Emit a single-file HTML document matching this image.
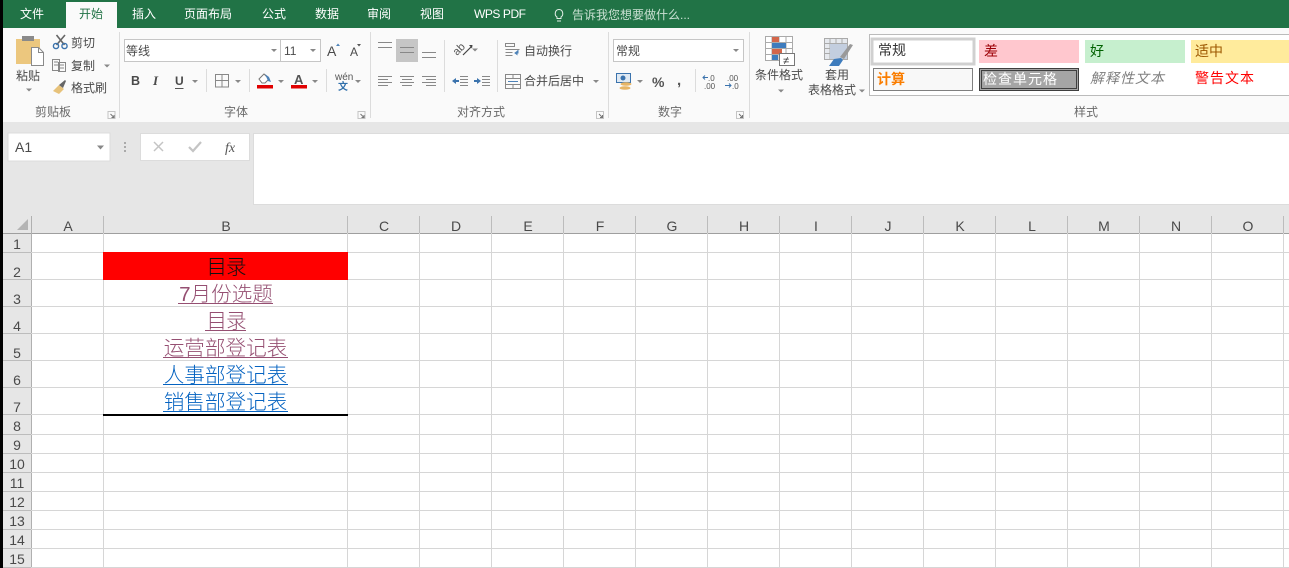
<!DOCTYPE html>
<html lang="zh"><head><meta charset="utf-8"><title>Excel</title>
<style>
html,body{margin:0;padding:0;background:#fff;width:1289px;height:568px;overflow:hidden}
svg{display:block}
text{font-family:"Liberation Sans","Noto Sans CJK SC",sans-serif;font-size:12px;fill:#4a4a4a}
.t{fill:#fff;font-size:12px}
.l{fill:#6a6a6a;font-size:12px}
.h{fill:#4a4a4a;font-size:14px;text-anchor:middle}
.c{font-size:20.6px;text-anchor:middle;font-weight:300}
.s{font-size:14px}
</style></head><body>
<svg width="1289" height="568" viewBox="0 0 1289 568" xmlns="http://www.w3.org/2000/svg">
<defs>
<path id="ar" d="M-3 -1.500H3L0 1.500Z" fill="#888"/>
<g id="lau"><path d="M-3.500 -3.500H3.500V3.500H-3.500Z" fill="none" stroke="#c4c4c4"/><path d="M-1 -1L2.500 2.500M2.500 0V2.500H0" fill="none" stroke="#777"/></g>
</defs>
<rect width="1289" height="568" fill="#fff"/>
<!-- top green -->
<rect width="1289" height="28" fill="#217346"/>
<rect x="66" y="2" width="51" height="27" fill="#fafafa"/>
<g class="tabs">
<text class="t" x="20" y="18">文件</text>
<text x="79" y="18" style="fill:#217346">开始</text>
<text class="t" x="132" y="18">插入</text>
<text class="t" x="184" y="18">页面布局</text>
<text class="t" x="262" y="18">公式</text>
<text class="t" x="315" y="18">数据</text>
<text class="t" x="367" y="18">审阅</text>
<text class="t" x="420" y="18">视图</text>
<text class="t" x="474" y="18" textLength="52">WPS PDF</text>
<path d="M557 18.500v-1.500c-3-2-2-7.500 2-7.500s5 5.500 2 7.500v1.500zM557 21h4" fill="none" stroke="#e4efe8"/>
<text x="572" y="19" style="fill:#c9e0d2;font-size:12px">告诉我您想要做什么...</text>
</g>
<!-- ribbon -->
<rect y="28" width="1289" height="94" fill="#fafafa"/>
<rect y="122" width="1289" height="84" fill="#e6e6e6"/>
<!-- separators -->
<g stroke="#dcdcdc"><path d="M119.500 32V118M370.500 32V118M608.500 32V118M749.500 32V118"/>
<path d="M206.500 69V92M249.500 69V92M326.500 69V92M444.500 40V92M497.500 40V92M695.500 69V92"/></g>
<!-- clipboard -->
<rect x="16" y="39" width="24" height="25" fill="#ecc77e"/>
<rect x="22" y="36" width="12" height="5" fill="#8a8a8a"/>
<path d="M31.500 47.500h7l5 5v13h-12z" fill="#fff" stroke="#8a8a8a"/>
<path d="M38.500 47.500v5h5" fill="none" stroke="#8a8a8a"/>
<text x="16" y="80">粘贴</text>
<use href="#ar" x="29" y="90"/>
<path d="M56.500 35l8 10M65 35l-8.500 10" stroke="#666" stroke-width="1.600" fill="none"/>
<circle cx="56" cy="46" r="2.600" fill="none" stroke="#3b73ad" stroke-width="1.400"/><circle cx="64.500" cy="46" r="2.600" fill="none" stroke="#3b73ad" stroke-width="1.400"/>
<text x="71" y="47">剪切</text>
<path d="M52.500 59.500h7v11h-7zM58.500 62.500h7v9h-7z" fill="#fafafa" stroke="#888"/>
<path d="M54 62h4M54 65h4M60 65h4M60 68h4" stroke="#888"/>
<text x="71" y="70">复制</text>
<use href="#ar" x="107" y="66"/>
<path d="M53 91l6-6 5 4-5 5z" fill="#e7c27a"/><path d="M59 85l6-5 1 1-3 7z" fill="#666"/>
<text x="71" y="92">格式刷</text>
<text x="35" y="116" class="l">剪贴板</text>
<use href="#lau" x="111.500" y="115"/>
<!-- font -->
<rect x="124.500" y="39.500" width="196" height="22" fill="#fff" stroke="#c6c6c6"/>
<path d="M280.500 39.500V61.500" stroke="#c6c6c6"/>
<text x="126" y="55">等线</text>
<use href="#ar" x="274" y="50.500"/>
<text x="284" y="55">11</text>
<use href="#ar" x="313" y="50.500"/>
<text x="327" y="56" style="font-size:14px">A</text><path d="M336 46l2-2.500 2 2.500z" fill="#4d82b8"/>
<text x="350" y="56" style="font-size:12px">A</text><path d="M357 44h4l-2 2.500z" fill="#555"/>
<text x="131" y="85" style="font-weight:bold;font-size:12.500px">B</text>
<text x="153" y="85" style="font-style:italic;font-weight:bold;font-size:13px;font-family:'Liberation Serif',serif">I</text>
<text x="175" y="85" style="font-weight:bold;font-size:12px">U</text><path d="M175 88.500h8.500" stroke="#555"/>
<use href="#ar" x="195" y="81.500"/>
<path d="M215.500 74.500h13v12.500h-13zM222 74.500v12.500M215.500 80.500h13" fill="none" stroke="#888"/>
<use href="#ar" x="238" y="81.500"/>
<path d="M259 79l5-5 5 5-4 4h-3z" fill="#fff" stroke="#777"/><path d="M265 74l4 3 2 5-3-1z" fill="#4d82b8"/>
<rect x="257" y="85" width="16" height="3.500" fill="#e00000"/>
<use href="#ar" x="281" y="81.500"/>
<text x="294" y="84" style="font-size:13px;font-weight:bold;fill:#555">A</text>
<rect x="291" y="85" width="16" height="3.500" fill="#e00000"/>
<use href="#ar" x="315" y="81.500"/>
<text x="335" y="80" style="font-size:10px;fill:#555">wén</text>
<text x="338" y="90" style="font-size:10px;font-weight:bold;fill:#2f6fab">文</text>
<use href="#ar" x="358" y="81.500"/>
<text x="224" y="116" class="l">字体</text>
<use href="#lau" x="361.500" y="115"/>
<!-- align -->
<rect x="396" y="39" width="22" height="23" fill="#c6c6c6"/>
<g stroke="#888" fill="none">
<path d="M378 42.500h14M378 47.500h14"/>
<path d="M400 47.500h14M400 52.500h14"/>
<path d="M422 52.500h14M422 57.500h14"/>
<path d="M378 76.500h14M378 79.500h10M378 82.500h14M378 85.500h10"/>
<path d="M400 76.500h14M402 79.500h10M400 82.500h14M402 85.500h10"/>
<path d="M422 76.500h14M426 79.500h10M422 82.500h14M426 85.500h10"/>
<path d="M460 76.500h8M460 79.500h8M460 82.500h8M460 85.500h8"/>
<path d="M482 76.500h8M482 79.500h8M482 82.500h8M482 85.500h8"/>
<path d="M505.500 43.500h9v3h-9zM505.500 49.500h14M505.500 52.500h7M505.500 55.500h7"/>
<path d="M505.500 74.500h15v14h-15zM505.500 78.500h15M505.500 84.500h15M513 74.500v4M513 84.500v4"/>
<path d="M508 81.500h10" stroke="#4d82b8"/>
</g>
<text transform="translate(457 56) rotate(-45)" style="font-size:11px;fill:#555">ab</text>
<path d="M463 55l8-8" stroke="#444" stroke-width="1.200"/><path d="M469 45l3.500 0-.5 3.500z" fill="#444"/>
<path d="M518 50v3h-3M515 53l2-1.500v3z" stroke="#4d82b8" fill="none"/>
<use href="#ar" x="475" y="50"/>
<path d="M452 81l4-3v2h3v2h-3v2z" fill="#3b73ad"/><path d="M481 81l-4-3v2h-3v2h3v2z" fill="#3b73ad"/>
<text x="524" y="55">自动换行</text>
<text x="524" y="85">合并后居中</text>
<use href="#ar" x="596" y="81.500"/>
<text x="457" y="116" class="l">对齐方式</text>
<use href="#lau" x="600" y="115"/>
<!-- number -->
<rect x="613.500" y="39.500" width="130" height="22" fill="#fff" stroke="#c6c6c6"/>
<text x="616" y="55">常规</text>
<use href="#ar" x="736" y="50.500"/>
<rect x="616.500" y="73.500" width="14" height="9" fill="#dfe9f3" stroke="#3b73ad"/>
<circle cx="623" cy="78" r="2.500" fill="#3b73ad"/>
<ellipse cx="626" cy="84" rx="5.500" ry="1.800" fill="#e7b565"/><ellipse cx="625" cy="88" rx="5.500" ry="1.800" fill="#e7b565"/>
<use href="#ar" x="640" y="81.500"/>
<text x="652" y="87" style="font-size:14px;font-weight:bold;fill:#555">%</text>
<text x="677" y="85" style="font-size:15px;font-weight:bold;fill:#555">,</text>
<text x="708" y="81" style="font-size:8px;fill:#555">.0</text><text x="704" y="89" style="font-size:8px;fill:#555">.00</text>
<path d="M708 77.500h-5M705 75.500l-2 2 2 2" stroke="#3b73ad" fill="none"/>
<text x="727" y="81" style="font-size:8px;fill:#555">.00</text><text x="732" y="89" style="font-size:8px;fill:#555">.0</text>
<path d="M725 85.500h6M729 83.500l2 2-2 2" stroke="#3b73ad" fill="none"/>
<text x="658" y="116" class="l">数字</text>
<use href="#lau" x="740" y="115"/>
<!-- cond fmt -->
<path d="M765.500 36.500h27v24h-27zM765.500 42.500h27M765.500 48.500h27M765.500 54.500h27M772 36.500v24M779 36.500v24M786 36.500v24" fill="#fff" stroke="#aaa"/>
<rect x="772" y="37" width="7" height="5" fill="#d3664a"/><rect x="772" y="43" width="14" height="5" fill="#3e7cbd"/><rect x="772" y="49" width="10" height="5" fill="#d3664a"/><rect x="772" y="55" width="6" height="5" fill="#3e7cbd"/>
<rect x="779.500" y="53.500" width="15" height="12" fill="#fff" stroke="#777"/>
<text x="783" y="64" style="font-size:11px;fill:#333">≠</text>
<text x="755" y="79">条件格式</text>
<use href="#ar" x="781" y="91"/>
<path d="M824.500 38.500h23v21h-23zM824.500 43.500h23M824.500 48.500h23M824.500 53.500h23M830 38.500v21M836 38.500v21M842 38.500v21" fill="#e6e9ee" stroke="#aaa"/>
<rect x="830" y="44" width="17" height="15" fill="#c3cedf"/>
<path d="M840 57l10-13 3 1-9 14z" fill="#999"/><path d="M829 66l5-7 7-1 2 2-4 6z" fill="#3e7cbd"/>
<text x="825" y="79">套用</text>
<text x="808" y="94">表格格式</text>
<use href="#ar" x="862" y="91"/>
<!-- styles -->
<rect x="869.500" y="34.500" width="424" height="61" fill="#fff" stroke="#bbb"/>
<rect x="872" y="39" width="102" height="25" fill="#fff" stroke="#d0d0d0" stroke-width="3"/>
<text x="878" y="55" class="s" style="fill:#333">常规</text>
<rect x="979" y="40" width="100" height="23" fill="#ffc7ce"/>
<text x="984" y="56" class="s" style="fill:#9c0006">差</text>
<rect x="1085" y="40" width="100" height="23" fill="#c6efce"/>
<text x="1090" y="56" class="s" style="fill:#006100">好</text>
<rect x="1191" y="40" width="98" height="23" fill="#ffeb9c"/>
<text x="1195" y="56" class="s" style="fill:#9c5700">适中</text>
<rect x="873.500" y="68.500" width="99" height="22" fill="#f8f8f8" stroke="#7f7f7f"/>
<text x="877" y="84" class="s" style="fill:#fa7d00;font-weight:bold">计算</text>
<rect x="979.500" y="68.500" width="99" height="22" fill="#a5a5a5" stroke="#3f3f3f"/>
<rect x="981.500" y="70.500" width="95" height="18" fill="none" stroke="#3f3f3f"/>
<text x="983" y="84" class="s" style="fill:#fff;letter-spacing:1px">检查单元格</text>
<text x="1090" y="83" class="s" style="fill:#7f7f7f;font-style:italic;letter-spacing:1px">解释性文本</text>
<text x="1195" y="83" class="s" style="fill:#ff0000;letter-spacing:1px">警告文本</text>
<text x="1074" y="116" class="l">样式</text>
<!-- formula bar -->
<rect x="8" y="133" width="102" height="28" fill="#fff" stroke="#dcdcdc"/>
<text x="15" y="152" style="font-size:14px">A1</text>
<path d="M97 145.500h7l-3.500 4z" fill="#888"/>
<g fill="#aaa"><rect x="124" y="142" width="2" height="2"/><rect x="124" y="146" width="2" height="2"/><rect x="124" y="150" width="2" height="2"/></g>
<rect x="140.500" y="133.500" width="109" height="27" fill="#fff" stroke="#dcdcdc"/>
<path d="M154 142l9 9M163 142l-9 9" stroke="#c4c4c4" stroke-width="1.500"/>
<path d="M189 147l4 4 8-9" stroke="#c4c4c4" stroke-width="2.200" fill="none"/>
<text x="225" y="152" style="font-family:'Liberation Serif',serif;font-style:italic;font-size:14px;fill:#555">fx</text>
<rect x="253.500" y="133.500" width="1040" height="71" fill="#fff" stroke="#dcdcdc"/>
<!-- header -->
<rect y="206" width="1289" height="362" fill="#fff"/>
<rect y="206" width="1289" height="27" fill="#e6e6e6"/>
<rect x="3" y="233" width="28" height="335" fill="#e6e6e6"/>
<path d="M28 219V230H17Z" fill="#b4b4b4"/>
<path d="M0 233.500H1289" stroke="#9f9f9f"/>
<path d="M31.500 216V568" stroke="#b0b0b0"/>
<!-- grid lines -->
<g stroke="#d6d6d6">
<path d="M31 252.500H1289M31 279.500H1289M31 306.500H1289M31 333.500H1289M31 360.500H1289M31 387.500H1289M31 414.500H1289M31 434.500H1289M31 453.500H1289M31 472.500H1289M31 491.500H1289M31 510.500H1289M31 529.500H1289M31 548.500H1289M31 567.500H1289"/>
<path d="M103.500 233V568M347.500 233V568M419.500 233V568M491.500 233V568M563.500 233V568M635.500 233V568M707.500 233V568M779.500 233V568M851.500 233V568M923.500 233V568M995.500 233V568M1067.500 233V568M1139.500 233V568M1211.500 233V568M1283.500 233V568"/>
</g>
<g stroke="#bcbcbc">
<path d="M103.500 216V233M347.500 216V233M419.500 216V233M491.500 216V233M563.500 216V233M635.500 216V233M707.500 216V233M779.500 216V233M851.500 216V233M923.500 216V233M995.500 216V233M1067.500 216V233M1139.500 216V233M1211.500 216V233M1283.500 216V233"/>
<path d="M3 252.500H31M3 279.500H31M3 306.500H31M3 333.500H31M3 360.500H31M3 387.500H31M3 414.500H31M3 434.500H31M3 453.500H31M3 472.500H31M3 491.500H31M3 510.500H31M3 529.500H31M3 548.500H31M3 567.500H31"/>
</g>
<rect width="3" height="568" fill="#000"/>
<!-- col heads -->
<g>
<text class="h" x="68" y="231">A</text><text class="h" x="226" y="231">B</text><text class="h" x="384" y="231">C</text><text class="h" x="456" y="231">D</text><text class="h" x="528" y="231">E</text><text class="h" x="600" y="231">F</text><text class="h" x="672" y="231">G</text><text class="h" x="744" y="231">H</text><text class="h" x="816" y="231">I</text><text class="h" x="888" y="231">J</text><text class="h" x="960" y="231">K</text><text class="h" x="1032" y="231">L</text><text class="h" x="1104" y="231">M</text><text class="h" x="1176" y="231">N</text><text class="h" x="1248" y="231">O</text>
</g>
<!-- row heads -->
<g>
<text class="h" x="17" y="249">1</text><text class="h" x="17" y="277">2</text><text class="h" x="17" y="304">3</text><text class="h" x="17" y="331">4</text><text class="h" x="17" y="358">5</text><text class="h" x="17" y="385">6</text><text class="h" x="17" y="412">7</text><text class="h" x="17" y="431">8</text><text class="h" x="17" y="450">9</text><text class="h" x="17" y="469">10</text><text class="h" x="17" y="488">11</text><text class="h" x="17" y="507">12</text><text class="h" x="17" y="526">13</text><text class="h" x="17" y="545">14</text><text class="h" x="17" y="564">15</text>
</g>
<!-- cells -->
<rect x="103" y="252" width="245" height="28" fill="#ff0000"/>
<text class="c" x="226" y="274" style="fill:#111;letter-spacing:-1px">目录</text>
<text class="c" x="226" y="301" style="fill:#954f72">7月份选题</text><rect x="178" y="303" width="95" height="1" fill="#954f72"/>
<text class="c" x="226" y="328" style="fill:#954f72;letter-spacing:-1px">目录</text><rect x="205" y="330" width="41" height="1" fill="#954f72"/>
<text class="c" x="225.500" y="355" style="fill:#954f72">运营部登记表</text><rect x="163" y="357" width="125" height="1" fill="#954f72"/>
<text class="c" x="225.500" y="382" style="fill:#0563c1">人事部登记表</text><rect x="163" y="384" width="125" height="1" fill="#0563c1"/>
<text class="c" x="225.500" y="409" style="fill:#0563c1">销售部登记表</text><rect x="163" y="411" width="125" height="1" fill="#0563c1"/>
<rect x="103" y="414" width="245" height="2" fill="#000"/>
</svg>
</body></html>
